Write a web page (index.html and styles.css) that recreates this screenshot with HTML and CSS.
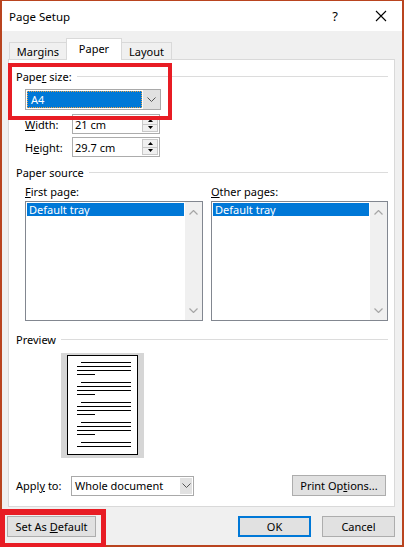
FILE: index.html
```html
<!DOCTYPE html>
<html lang="en">
<head>
  <meta charset="UTF-8">
  <meta name="viewport" content="width=device-width, initial-scale=1.0">
  <title>Page Setup</title>
  <link rel="stylesheet" href="styles.css">
</head>
<body>
  <div class="screen">
    <div class="window">
      <div class="titlebar">
        <span class="title">Page Setup</span>
        <span class="help">?</span>
        <svg class="close" width="12" height="12" viewBox="0 0 12 12">
          <path d="M1 1 L11 11 M11 1 L1 11" stroke="#000" stroke-width="1.1" fill="none"/>
        </svg>
      </div>

      <div class="dialog">
        <div class="tabs">
          <div class="tab tab-margins">Margins</div>
          <div class="tab tab-paper active">Paper</div>
          <div class="tab tab-layout">Layout</div>
        </div>

        <div class="panel">
          <div class="group-title"><span>Pape<u>r</u> size:</span><i></i></div>
          <div class="combo combo-size">
            <div class="combo-value selected"><span>A4</span></div>
            <div class="combo-button">
              <svg width="9" height="5" viewBox="0 0 9 5"><path d="M0.5 0.5 L4.5 4.5 L8.5 0.5" stroke="#555" fill="none"/></svg>
            </div>
          </div>

          <div class="field-row row-width">
            <label><u>W</u>idth:</label>
            <div class="spin-input">
              <span>21 cm</span>
              <div class="spin">
                <div class="spin-half"><svg width="5" height="3" viewBox="0 0 5 3"><path d="M0 3 L2.5 0 L5 3 Z" fill="#000"/></svg></div>
                <div class="spin-half"><svg width="5" height="3" viewBox="0 0 5 3"><path d="M0 0 L2.5 3 L5 0 Z" fill="#000"/></svg></div>
              </div>
            </div>
          </div>
          <div class="field-row row-height">
            <label>H<u>e</u>ight:</label>
            <div class="spin-input">
              <span>29.7 cm</span>
              <div class="spin">
                <div class="spin-half"><svg width="5" height="3" viewBox="0 0 5 3"><path d="M0 3 L2.5 0 L5 3 Z" fill="#000"/></svg></div>
                <div class="spin-half"><svg width="5" height="3" viewBox="0 0 5 3"><path d="M0 0 L2.5 3 L5 0 Z" fill="#000"/></svg></div>
              </div>
            </div>
          </div>

          <div class="group-title source-title"><span>Paper source</span><i></i></div>
          <div class="source-columns">
            <div class="source-col">
              <div class="col-label"><u>F</u>irst page:</div>
              <div class="listbox">
                <div class="list-items"><div class="list-item selected">Default tray</div></div>
                <div class="scrollbar">
                  <svg width="9" height="5" viewBox="0 0 9 5"><path d="M0.5 4.5 L4.5 0.5 L8.5 4.5" stroke="#a6a6a6" stroke-width="1.2" fill="none"/></svg>
                  <svg width="9" height="5" viewBox="0 0 9 5"><path d="M0.5 0.5 L4.5 4.5 L8.5 0.5" stroke="#a6a6a6" stroke-width="1.2" fill="none"/></svg>
                </div>
              </div>
            </div>
            <div class="source-col">
              <div class="col-label"><u>O</u>ther pages:</div>
              <div class="listbox">
                <div class="list-items"><div class="list-item selected">Default tray</div></div>
                <div class="scrollbar">
                  <svg width="9" height="5" viewBox="0 0 9 5"><path d="M0.5 4.5 L4.5 0.5 L8.5 4.5" stroke="#a6a6a6" stroke-width="1.2" fill="none"/></svg>
                  <svg width="9" height="5" viewBox="0 0 9 5"><path d="M0.5 0.5 L4.5 4.5 L8.5 0.5" stroke="#a6a6a6" stroke-width="1.2" fill="none"/></svg>
                </div>
              </div>
            </div>
          </div>

          <div class="group-title preview-title"><span>Preview</span><i></i></div>
          <div class="preview">
            <div class="preview-page">
              <div class="para"><b></b><b></b><b></b><b></b></div>
              <div class="para"><b></b><b></b><b></b><b></b></div>
              <div class="para"><b></b><b></b><b></b><b></b></div>
              <div class="para"><b></b><b></b><b></b><b></b></div>
              <div class="para"><b></b><b></b></div>
            </div>
          </div>

          <div class="apply-row">
            <label>Appl<u>y</u> to:</label>
            <div class="combo combo-apply">
              <div class="combo-value"><span>Whole document</span></div>
              <div class="combo-button">
                <svg width="9" height="5" viewBox="0 0 9 5"><path d="M0.5 0.5 L4.5 4.5 L8.5 0.5" stroke="#555" fill="none"/></svg>
              </div>
            </div>
            <button class="btn btn-print">Print Op<u>t</u>ions...</button>
          </div>
        </div>
      </div>

      <div class="footer">
        <button class="btn btn-default">Set As <u>D</u>efault</button>
        <button class="btn btn-ok">OK</button>
        <button class="btn btn-cancel">Cancel</button>
      </div>
    </div>

    <!-- red highlight marks over the dialog -->
    <div class="highlight hl-size"></div>
    <div class="highlight hl-default"></div>
  </div>
</body>
</html>
```

FILE: styles.css
```css
html, body {
  margin: 0;
  padding: 0;
  background: #ffffff;
}

* {
  box-sizing: border-box;
}

.screen {
  position: relative;
  width: 404px;
  height: 547px;
  overflow: hidden;
  font-family: "Noto Sans", "Liberation Sans", sans-serif;
  font-size: 11px;
  color: #000;
}

u {
  text-decoration: underline;
  text-underline-offset: 1px;
}

.window {
  display: flex;
  flex-direction: column;
  width: 404px;
  height: 547px;
  border-style: solid;
  border-color: #b9441f;
  border-width: 1px 2px 2px 2px;
  background: #f0f0f0;
}

/* title bar */
.titlebar {
  display: flex;
  align-items: center;
  height: 30px;
  padding-left: 7px;
  background: #ffffff;
}

.title {
  font-size: 11.5px;
  flex: 1;
}

.help {
  font-size: 13px;
  margin-right: 37px;
}

.close {
  margin-right: 15px;
}

/* tabs */
.dialog {
  flex: 1;
  display: flex;
  flex-direction: column;
  padding: 0 7px 0 6px;
}

.tabs {
  display: flex;
  align-items: flex-end;
  height: 28px;
  padding-left: 1px;
}

.tab {
  display: flex;
  align-items: center;
  justify-content: center;
  height: 17px;
  border: 1px solid #d9d9d9;
  border-bottom: none;
  background: #f0f0f0;
}

.tab-margins {
  width: 57px;
  border-right: none;
}

.tab-paper {
  width: 56px;
}

.tab-layout {
  width: 50px;
  border-left: none;
}

.tab.active {
  position: relative;
  z-index: 1;
  height: 22px;
  margin-bottom: -1px;
  padding-bottom: 3px;
  background: #ffffff;
}

/* tab page */
.panel {
  flex: 1;
  display: flex;
  flex-direction: column;
  border: 1px solid #d9d9d9;
  background: #ffffff;
  padding: 9px 6px 10px 7px;
}

.group-title {
  display: flex;
  align-items: center;
  height: 14px;
}

.group-title i {
  flex: 1;
  height: 1px;
  margin-left: 5px;
  background: #dcdcdc;
}

.combo {
  display: flex;
  border: 1px solid #a9a9a9;
  background: #ffffff;
}

.combo-value {
  flex: 1;
  display: flex;
  align-items: center;
  padding: 1px;
}

.combo-value span {
  padding-left: 3px;
}

.combo-value.selected span {
  flex: 1;
  height: 100%;
  display: flex;
  align-items: center;
  background: #0078d7;
  color: #ffffff;
  border: 1px dotted #e8a24a;
}

.combo-button {
  display: flex;
  align-items: center;
  justify-content: center;
  width: 17px;
  background: #e1e1e1;
}

.combo-size {
  width: 136px;
  height: 21px;
  margin: 6px 0 0 9px;
}

.field-row {
  display: flex;
  align-items: center;
  margin-left: 9px;
}

.row-width {
  margin-top: 4px;
}

.row-height {
  margin-top: 3px;
}

.field-row label {
  width: 47px;
}

.spin-input {
  display: flex;
  align-items: center;
  width: 88px;
  height: 20px;
  border: 1px solid #acacac;
  padding: 1px 1px 1px 2px;
}

.spin-input span {
  flex: 1;
}

.spin {
  display: flex;
  flex-direction: column;
  width: 16px;
  height: 100%;
}

.spin-half {
  flex: 1;
  display: flex;
  align-items: center;
  justify-content: center;
  border: 1px solid #c8c8c8;
  background: #f0f0f0;
}

.spin-half + .spin-half {
  border-top: none;
}

/* paper source */
.source-title {
  margin-top: 8px;
}

.source-columns {
  display: grid;
  grid-template-columns: 178px 177px;
  column-gap: 8px;
  margin: 6px 0 0 9px;
}

.col-label {
  height: 14px;
  line-height: 14px;
}

.listbox {
  display: flex;
  height: 120px;
  margin-top: 2px;
  border: 1px solid #828790;
}

.list-items {
  flex: 1;
  padding: 1px;
}

.list-item {
  height: 13px;
  line-height: 13px;
  padding-left: 2px;
}

.list-item.selected {
  background: #0078d7;
  color: #ffffff;
}

.scrollbar {
  display: flex;
  flex-direction: column;
  align-items: center;
  justify-content: space-between;
  width: 17px;
  padding: 8px 0 7px;
  background: #f0f0f0;
}

/* preview */
.preview-title {
  margin-top: 11px;
}

.preview {
  width: 83px;
  height: 105px;
  margin: 7px 0 0 45px;
  padding: 2px 6px 3px 6px;
  background: #d6d6d6;
}

.preview-page {
  display: flex;
  flex-direction: column;
  gap: 7px;
  height: 100%;
  border: 1px solid #000;
  background: #ffffff;
  padding: 6px 6px 0 9px;
}

.para {
  display: flex;
  flex-direction: column;
  gap: 3px;
}

.para b {
  display: block;
  height: 1px;
  background: #000;
}

.para b:first-child {
  margin-left: 4px;
}

.para b:nth-child(4) {
  width: 18px;
}

/* apply row */
.apply-row {
  display: flex;
  align-items: center;
  margin-top: auto;
  height: 21px;
}

.apply-row label {
  width: 55px;
}

.combo-apply {
  width: 123px;
  height: 20px;
}

.combo-apply .combo-value span {
  padding-left: 2px;
}

.combo-apply .combo-button {
  width: 12px;
  margin: 1px;
}

.btn {
  font-family: inherit;
  font-size: 11px;
  color: #000;
  height: 21px;
  padding: 0;
  border: 1px solid #adadad;
  background: #e1e1e1;
}

.btn-print {
  width: 94px;
  margin-left: auto;
  margin-right: 2px;
}

/* bottom buttons */
.footer {
  display: flex;
  height: 38px;
  padding: 9px 7px 0 5px;
}

.btn-default {
  width: 89px;
}

.btn-ok {
  width: 73px;
  margin-left: auto;
  border: 2px solid #0078d7;
}

.btn-cancel {
  width: 73px;
  margin-left: 11px;
}

/* red marks */
.highlight {
  position: absolute;
  border: 4px solid #e81c24;
}

.hl-size {
  left: 8px;
  top: 63px;
  width: 164px;
  height: 57px;
}

.hl-default {
  left: 0;
  top: 509px;
  width: 106px;
  height: 40px;
  border-width: 6px 5px 6px 5px;
}
```
